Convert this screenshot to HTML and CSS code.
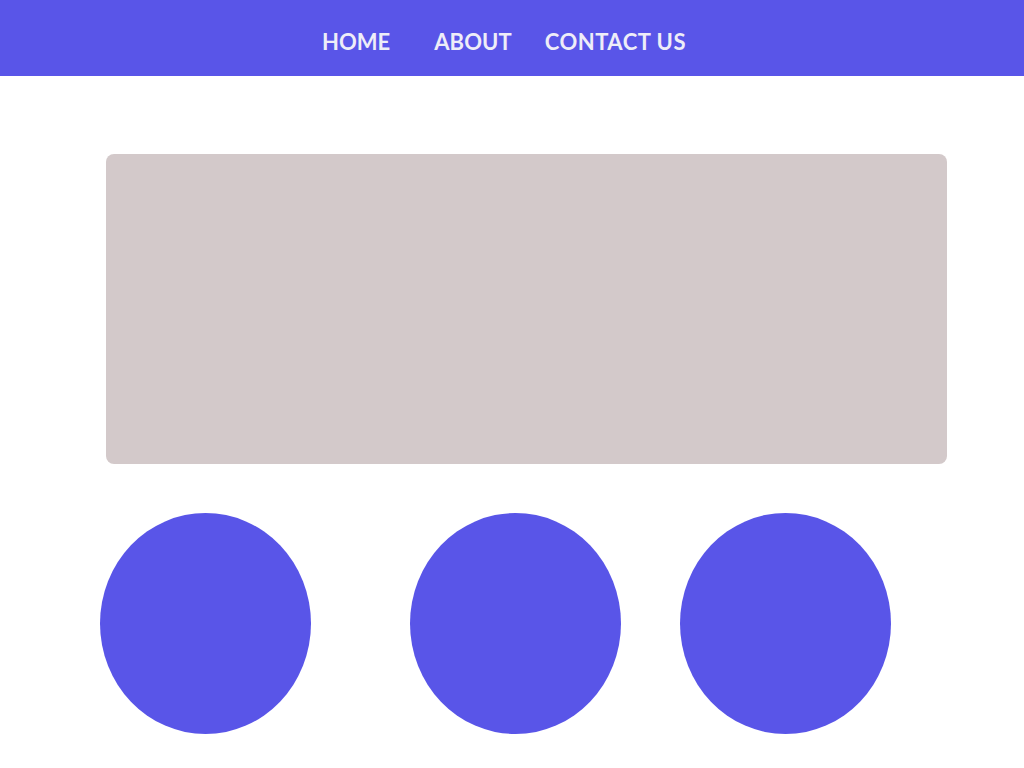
FILE: index.html
```html
<!DOCTYPE html>
<html>
<head>
<meta charset="utf-8">
<link rel="stylesheet" href="styles.css">
</head>
<body>
<nav class="nav">
  <a class="nav-link home" href="#">HOME</a>
  <a class="nav-link about" href="#">ABOUT</a>
  <a class="nav-link contact" href="#">CONTACT US</a>
</nav>
<main class="main">
  <div class="banner"></div>
  <div class="circles">
    <div class="circle c1"></div>
    <div class="circle c2"></div>
    <div class="circle c3"></div>
  </div>
</main>
</body>
</html>
```
FILE: styles.css
```css
* { box-sizing: border-box; }
body {
  margin: 0;
  background: #ffffff;
  font-family: "Lato", "Open Sans", sans-serif;
}
.nav {
  height: 76px;
  background: #5955e8;
  display: flex;
  align-items: center;
  padding-left: 322px;
  padding-top: 6px;
}
.nav-link {
  color: #eeedf8;
  text-decoration: none;
  font-weight: 700;
  font-size: 22px;
}
.home { margin-right: 44px; }
.about { margin-right: 33px; letter-spacing: 0.1px; }
.contact { letter-spacing: 0.5px; }
.main {
  padding-top: 78px;
}
.banner {
  margin-left: 106px;
  width: 841px;
  height: 310px;
  background: #d3c9ca;
  border-radius: 8px;
}
.circles {
  display: flex;
  padding-left: 100px;
  margin-top: 49px;
}
.circle {
  width: 211px;
  height: 221px;
  border-radius: 50%;
  background: #5955e8;
}
.c1 { margin-right: 99px; }
.c2 { margin-right: 59px; }
```
